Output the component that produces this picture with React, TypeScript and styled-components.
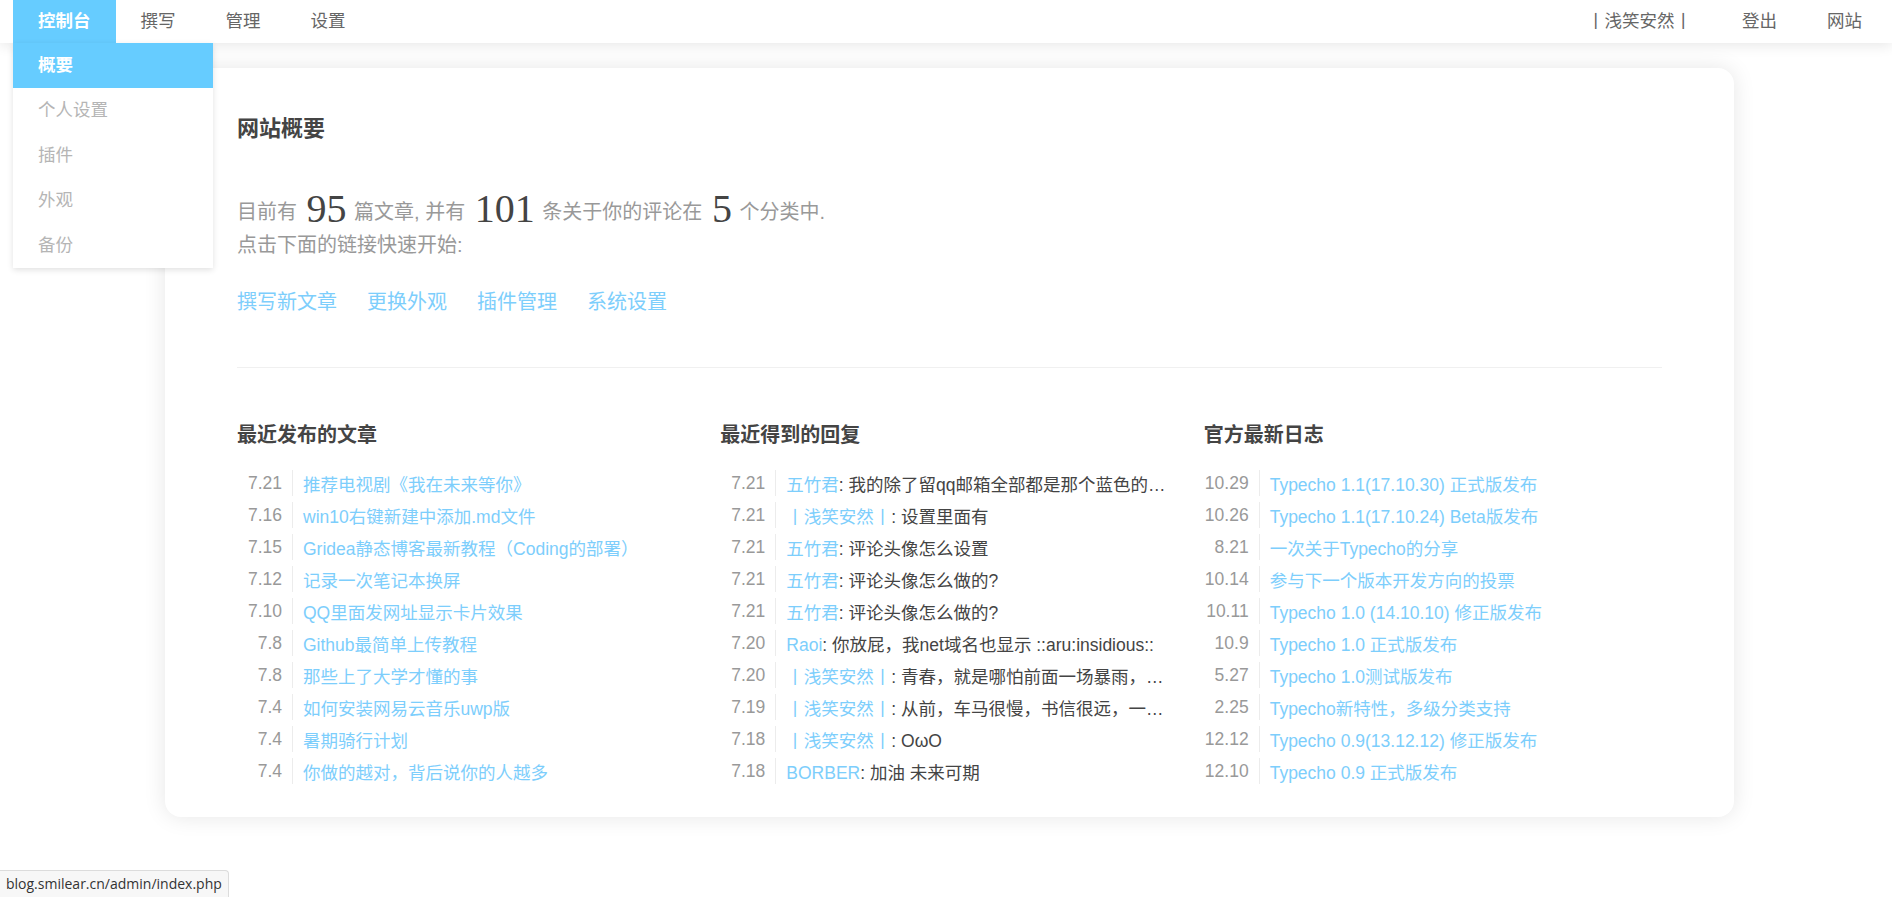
import React from "react";
import styled, { createGlobalStyle } from "styled-components";

const GlobalStyle = createGlobalStyle`
  html, body { margin: 0; padding: 0; background: #fff; }
  body {
    font-family: "Liberation Sans", Arial, "Noto Sans CJK SC", sans-serif;
    font-size: 17.5px;
    color: #444;
  }
  * { box-sizing: border-box; }
  a { text-decoration: none; }
`;

const BLUE = "#66ccff";
const LINK = "#7dcefc";

const Header = styled.header`
  position: relative;
  z-index: 5;
  height: 43px;
  background: #fff;
  box-shadow: 0 3px 12px rgba(0, 0, 0, 0.09);
  display: flex;
  justify-content: space-between;
  padding: 0 5px 0 13px;
`;

const NavGroup = styled.nav`
  display: flex;
  height: 100%;
`;

const NavItem = styled.div<{ $active?: boolean }>`
  position: relative;
  height: 43px;
  line-height: 43px;
  padding: 0 25px;
  color: ${(p) => (p.$active ? "#fff" : "#666")};
  background: ${(p) => (p.$active ? BLUE : "transparent")};
  font-weight: ${(p) => (p.$active ? "bold" : "normal")};
  white-space: nowrap;
`;

const Dropdown = styled.ul`
  position: absolute;
  top: 43px;
  left: 0;
  width: 200px;
  margin: 0;
  padding: 0;
  list-style: none;
  background: #fff;
  box-shadow: 0 2px 6px rgba(0, 0, 0, 0.12);
  z-index: 10;
`;

const DropItem = styled.li<{ $active?: boolean }>`
  height: 45px;
  line-height: 45px;
  padding: 0 25px;
  background: ${(p) => (p.$active ? BLUE : "#fff")};
  color: ${(p) => (p.$active ? "#fff" : "#b5b5b5")};
  font-weight: ${(p) => (p.$active ? "bold" : "normal")};
`;

const Main = styled.main`
  padding: 25px 158px 60px 165px;
`;

const Card = styled.section`
  background: #fff;
  border-radius: 16px;
  box-shadow: 0 0 22px rgba(0, 0, 0, 0.1);
  padding: 27px 72px 22px 72px;
  min-height: 749px;
`;

const Title = styled.h2`
  margin: 0;
  font-size: 22px;
  font-weight: bold;
  color: #444;
  line-height: 22px;
  padding-top: 23px;
`;

const Welcome = styled.div`
  margin-top: 46px;
  font-size: 20px;
  color: #999;
`;

const StatLine = styled.p`
  margin: 0;
  line-height: 40px;
  height: 40px;
`;

const Num = styled.em`
  font-family: "Liberation Serif", "DejaVu Serif", serif;
  font-style: normal;
  font-size: 40px;
  color: #444;
  margin: 0 2px 0 4px;
  position: relative;
  top: 3px;
`;

const SubLine = styled.p`
  margin: 0;
  line-height: 38px;
`;

const QuickLinks = styled.div`
  display: flex;
  gap: 30px;
  margin-top: 25px;
  line-height: 26px;
`;

const QuickLink = styled.a`
  color: ${LINK};
  font-size: 20px;
`;

const Divider = styled.hr`
  border: none;
  border-top: 1px solid #f0f0f0;
  margin: 52px 0 0 0;
`;

const Columns = styled.div`
  display: grid;
  grid-template-columns: repeat(3, minmax(0, 1fr));
  column-gap: 25px;
  margin-top: 55px;
`;

const ColTitle = styled.h3`
  margin: 0 0 20px 0;
  font-size: 20px;
  line-height: 24px;
  font-weight: bold;
  color: #444;
`;

const List = styled.ul`
  margin: 0;
  padding: 0;
  list-style: none;
`;

const Row = styled.li`
  display: flex;
  align-items: center;
  height: 32px;
  white-space: nowrap;
`;

const DateCell = styled.span`
  flex: 0 0 56px;
  height: 26px;
  line-height: 26px;
  text-align: right;
  padding-right: 10px;
  margin-right: 10px;
  border-right: 1px solid #ececec;
  color: #999;
`;

const RowText = styled.span`
  flex: 1;
  min-width: 0;
  white-space: nowrap;
  color: #444;
`;

const Link = styled.a`
  color: ${LINK};
`;

const StatusBubble = styled.div`
  position: fixed;
  left: 0;
  bottom: 0;
  height: 27px;
  line-height: 25px;
  padding: 0 6px;
  background: #f7f7f7;
  border: 1px solid #dcdcdc;
  border-left: none;
  border-bottom: none;
  border-top-right-radius: 4px;
  font-family: "Open Sans", "Liberation Sans", sans-serif;
  font-size: 14px;
  color: #333;
`;

const posts: [string, string][] = [
  ["7.21", "推荐电视剧《我在未来等你》"],
  ["7.16", "win10右键新建中添加.md文件"],
  ["7.15", "Gridea静态博客最新教程（Coding的部署）"],
  ["7.12", "记录一次笔记本换屏"],
  ["7.10", "QQ里面发网址显示卡片效果"],
  ["7.8", "Github最简单上传教程"],
  ["7.8", "那些上了大学才懂的事"],
  ["7.4", "如何安装网易云音乐uwp版"],
  ["7.4", "暑期骑行计划"],
  ["7.4", "你做的越对，背后说你的人越多"],
];

const replies: [string, string, string][] = [
  ["7.21", "五竹君", "我的除了留qq邮箱全部都是那个蓝色的…"],
  ["7.21", "丨浅笑安然丨", "设置里面有"],
  ["7.21", "五竹君", "评论头像怎么设置"],
  ["7.21", "五竹君", "评论头像怎么做的?"],
  ["7.21", "五竹君", "评论头像怎么做的?"],
  ["7.20", "Raoi", "你放屁，我net域名也显示 ::aru:insidious::"],
  ["7.20", "丨浅笑安然丨", "青春，就是哪怕前面一场暴雨，…"],
  ["7.19", "丨浅笑安然丨", "从前，车马很慢，书信很远，一…"],
  ["7.18", "丨浅笑安然丨", "OωO"],
  ["7.18", "BORBER", "加油 未来可期"],
];

const logs: [string, string][] = [
  ["10.29", "Typecho 1.1(17.10.30) 正式版发布"],
  ["10.26", "Typecho 1.1(17.10.24) Beta版发布"],
  ["8.21", "一次关于Typecho的分享"],
  ["10.14", "参与下一个版本开发方向的投票"],
  ["10.11", "Typecho 1.0 (14.10.10) 修正版发布"],
  ["10.9", "Typecho 1.0 正式版发布"],
  ["5.27", "Typecho 1.0测试版发布"],
  ["2.25", "Typecho新特性，多级分类支持"],
  ["12.12", "Typecho 0.9(13.12.12) 修正版发布"],
  ["12.10", "Typecho 0.9 正式版发布"],
];

export default function App() {
  return (
    <>
      <GlobalStyle />
      <Header>
        <NavGroup>
          <NavItem $active>
            控制台
            <Dropdown>
              <DropItem $active>概要</DropItem>
              <DropItem>个人设置</DropItem>
              <DropItem>插件</DropItem>
              <DropItem>外观</DropItem>
              <DropItem>备份</DropItem>
            </Dropdown>
          </NavItem>
          <NavItem>撰写</NavItem>
          <NavItem>管理</NavItem>
          <NavItem>设置</NavItem>
        </NavGroup>
        <NavGroup>
          <NavItem>丨浅笑安然丨</NavItem>
          <NavItem>登出</NavItem>
          <NavItem>网站</NavItem>
        </NavGroup>
      </Header>
      <Main>
        <Card>
          <Title>网站概要</Title>
          <Welcome>
            <StatLine>
              目前有 <Num>95</Num> 篇文章, 并有 <Num>101</Num> 条关于你的评论在 <Num>5</Num> 个分类中.
            </StatLine>
            <SubLine>点击下面的链接快速开始:</SubLine>
            <QuickLinks>
              <QuickLink>撰写新文章</QuickLink>
              <QuickLink>更换外观</QuickLink>
              <QuickLink>插件管理</QuickLink>
              <QuickLink>系统设置</QuickLink>
            </QuickLinks>
          </Welcome>
          <Divider />
          <Columns>
            <div>
              <ColTitle>最近发布的文章</ColTitle>
              <List>
                {posts.map(([d, t], i) => (
                  <Row key={i}>
                    <DateCell>{d}</DateCell>
                    <RowText>
                      <Link>{t}</Link>
                    </RowText>
                  </Row>
                ))}
              </List>
            </div>
            <div>
              <ColTitle>最近得到的回复</ColTitle>
              <List>
                {replies.map(([d, n, t], i) => (
                  <Row key={i}>
                    <DateCell>{d}</DateCell>
                    <RowText>
                      <Link>{n}</Link>: {t}
                    </RowText>
                  </Row>
                ))}
              </List>
            </div>
            <div>
              <ColTitle>官方最新日志</ColTitle>
              <List>
                {logs.map(([d, t], i) => (
                  <Row key={i}>
                    <DateCell>{d}</DateCell>
                    <RowText>
                      <Link>{t}</Link>
                    </RowText>
                  </Row>
                ))}
              </List>
            </div>
          </Columns>
        </Card>
      </Main>
      <StatusBubble>blog.smilear.cn/admin/index.php</StatusBubble>
    </>
  );
}
